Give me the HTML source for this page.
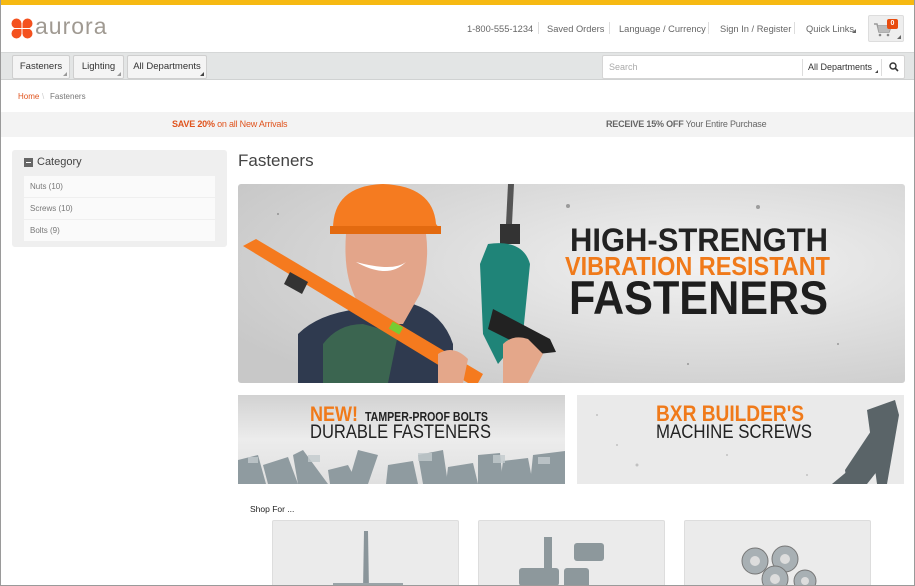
<!DOCTYPE html>
<html><head><meta charset="utf-8"><style>
*{margin:0;padding:0;box-sizing:border-box}
body{width:915px;height:586px;overflow:hidden;background:#fff;font-family:"Liberation Sans",Arial,sans-serif;position:relative;color:#555}
.frame{position:absolute;left:0;top:0;width:915px;height:586px;border:1px solid #9a9a9a;border-top:none;pointer-events:none;z-index:10}
.top{position:absolute;left:0;top:0;width:915px;height:5px;background:#f6b912}
.abs{position:absolute}
.hl{font-size:9.3px;color:#666;top:24px}
.sep{position:absolute;top:22px;width:1px;height:12px;background:#ddd}
.nav{position:absolute;left:1px;top:52px;width:913px;height:28px;background:#e3e5e5;border-top:1px solid #d5d7d7;border-bottom:1px solid #d0d2d2}
.btn{position:absolute;top:2px;height:24px;background:#f4f4f4;border:1px solid #cfcfcf;border-radius:2px;font-size:9.5px;color:#333;line-height:22px;text-align:center}
.tri{position:absolute;right:2px;bottom:2px;width:0;height:0;border-left:4px solid transparent;border-bottom:4px solid #999}
.promo{position:absolute;left:1px;top:112px;width:913px;height:25px;background:#f3f3f3;font-size:9px;line-height:25px}
.side{position:absolute;left:12px;top:150px;width:215px;height:97px;background:#efefef;border-radius:3px}
.item{position:absolute;left:12px;width:191px;height:21px;background:#fafafa;font-size:8px;color:#777;line-height:21px;padding-left:6px}
.card{position:absolute;top:520px;width:187px;height:66px;background:#ebebeb;border:1px solid #ddd;border-bottom:none;border-radius:2px 2px 0 0;overflow:hidden}
</style></head><body>
<div class="top"></div>
<div class="frame"></div>
<svg class="abs" style="left:11px;top:18px" width="22" height="21" viewBox="0 0 22 21">
<g fill="#f4511e"><circle cx="5.5" cy="5.5" r="5"/><circle cx="16.5" cy="5.5" r="5"/><circle cx="5.5" cy="15.5" r="5"/><circle cx="16.5" cy="15.5" r="5"/><rect x="5" y="5" width="12" height="11"/></g>
<path d="M11 0V21M0 10.5H22" stroke="#fff" stroke-width="1"/></svg>
<div class="abs" style="left:35px;top:13px;font-size:23px;color:#a09a92;letter-spacing:1px">aurora</div>
<div class="abs hl" style="left:467px">1-800-555-1234</div>
<div class="sep" style="left:538px"></div>
<div class="abs hl" style="left:547px">Saved Orders</div>
<div class="sep" style="left:609px"></div>
<div class="abs hl" style="left:619px">Language / Currency</div>
<div class="sep" style="left:708px"></div>
<div class="abs hl" style="left:720px">Sign In / Register</div>
<div class="sep" style="left:794px"></div>
<div class="abs hl" style="left:806px">Quick Links</div>
<div class="abs" style="left:852px;top:29px;border-left:4px solid transparent;border-bottom:4px solid #666"></div>
<div class="abs" style="left:868px;top:15px;width:36px;height:27px;background:#eee;border:1px solid #ddd;border-radius:2px">
<svg class="abs" style="left:5px;top:7px" width="18" height="14" viewBox="0 0 18 14"><path d="M0 1H3L5 9H15L17 3H4" fill="none" stroke="#999" stroke-width="1.5"/><path d="M4 3H17L15 9H5Z" fill="#bbb"/><circle cx="6" cy="12" r="1.3" fill="#888"/><circle cx="14" cy="12" r="1.3" fill="#888"/></svg>
<div class="abs" style="left:18px;top:3px;width:11px;height:10px;background:#e84c0e;border-radius:2px;color:#fff;font-size:7px;font-weight:bold;text-align:center;line-height:10px">0</div>
<div class="abs" style="right:2px;bottom:2px;border-left:4px solid transparent;border-bottom:4px solid #666"></div>
</div>
<div class="nav">
<div class="btn" style="left:11px;width:58px">Fasteners<span class="tri"></span></div>
<div class="btn" style="left:72px;width:51px">Lighting<span class="tri"></span></div>
<div class="btn" style="left:126px;width:80px">All Departments<span class="tri" style="border-bottom-color:#444"></span></div>
<div class="abs" style="left:601px;top:2px;width:303px;height:24px;background:#fff;border:1px solid #d5d5d5;border-radius:2px">
<div class="abs" style="left:6px;top:6px;font-size:9px;color:#aaa">Search</div>
<div class="abs" style="left:199px;top:3px;width:1px;height:17px;background:#ddd"></div>
<div class="abs" style="left:205px;top:6px;font-size:9px;color:#333">All Departments</div>
<div class="abs" style="left:272px;top:14px;border-left:3px solid transparent;border-bottom:3px solid #444"></div>
<div class="abs" style="left:278px;top:3px;width:1px;height:17px;background:#ddd"></div>
<svg class="abs" style="left:286px;top:6px" width="10" height="10" viewBox="0 0 10 10"><circle cx="4" cy="4" r="3" fill="none" stroke="#333" stroke-width="1.4"/><path d="M6.2 6.2L9 9" stroke="#333" stroke-width="1.6"/></svg>
</div>
</div>
<div class="abs" style="left:18px;top:92px;font-size:8px;color:#e0541e">Home</div>
<div class="abs" style="left:42px;top:92px;font-size:8px;color:#ccc">\</div>
<div class="abs" style="left:50px;top:92px;font-size:8px;color:#777">Fasteners</div>
<div class="promo"><span class="abs" style="left:171px;color:#e0541e;letter-spacing:-0.2px"><b>SAVE 20%</b> on all New Arrivals</span><span class="abs" style="left:605px;color:#666;letter-spacing:-0.2px"><b>RECEIVE 15% OFF</b> Your Entire Purchase</span></div>
<div class="side">
<div class="abs" style="left:12px;top:8px;width:9px;height:9px;background:#666"><div class="abs" style="left:2px;top:4px;width:5px;height:1px;background:#fff"></div></div>
<div class="abs" style="left:25px;top:6px;font-size:11px;color:#444">Category</div>
<div class="item" style="top:26px">Nuts (10)</div>
<div class="item" style="top:48px">Screws (10)</div>
<div class="item" style="top:70px">Bolts (9)</div>
</div>
<div class="abs" style="left:238px;top:151px;font-size:17px;color:#444">Fasteners</div>
<svg class="abs" style="left:238px;top:184px" width="667" height="199" viewBox="0 0 667 199">
<defs><radialGradient id="cg" cx="0.7" cy="0.4" r="0.8"><stop offset="0" stop-color="#f2f2f2"/><stop offset="1" stop-color="#c8c8c8"/></radialGradient></defs>
<rect width="667" height="199" rx="3" fill="url(#cg)"/>
<g fill="#555" opacity=".5"><circle cx="330" cy="22" r="2"/><circle cx="520" cy="23" r="2"/><circle cx="40" cy="30" r="1"/><circle cx="600" cy="160" r="1"/><circle cx="450" cy="180" r="1"/><circle cx="250" cy="120" r="1"/></g>
<path d="M60 199V150Q80 130 120 125L175 120Q205 130 215 160V199Z" fill="#2f3a4f"/>
<path d="M85 199V160Q100 140 125 140L160 150L150 199Z" fill="#3b6550"/>
<path d="M108 50Q105 90 118 115L135 140H165L182 110Q192 80 188 50Z" fill="#e3a58a"/>
<path d="M95 45Q95 2 145 0Q195 2 198 40L202 45L95 48Z" fill="#f57b20"/>
<path d="M92 42H203V50H92Z" fill="#e36a10"/>
<path d="M118 78Q150 96 168 78Q155 88 118 78Z" fill="#fff"/>
<path d="M5 62L18 55L245 190L240 199H230Z" fill="#f57a1e"/>
<path d="M52 88L70 98L64 110L46 100Z" fill="#333"/>
<rect x="152" y="140" width="12" height="8" fill="#7c3" transform="rotate(30 158 144)"/>
<path d="M270 0L276 0L274 40H268Z" fill="#555"/>
<path d="M262 40H282V60H262Z" fill="#333"/>
<path d="M250 60Q285 55 292 80L285 150L260 180L245 150L242 80Z" fill="#1f8478"/>
<path d="M255 125L312 155L318 168L300 170L250 145Z" fill="#222"/>
<path d="M265 160Q275 150 290 155L305 170L290 199H265Z" fill="#e4a78a"/>
<path d="M200 170Q215 160 230 175L225 199H200Z" fill="#e4a78a"/>
<text x="332" y="67" font-family="Liberation Sans" font-weight="bold" font-size="32" fill="#222" textLength="258" lengthAdjust="spacingAndGlyphs">HIGH-STRENGTH</text>
<text x="327" y="91" font-family="Liberation Sans" font-weight="bold" font-size="26" fill="#f07a1a" textLength="265" lengthAdjust="spacingAndGlyphs">VIBRATION RESISTANT</text>
<text x="331" y="130" font-family="Liberation Sans" font-weight="bold" font-size="47" fill="#1e1e1e" textLength="259" lengthAdjust="spacingAndGlyphs">FASTENERS</text>
</svg>
<svg class="abs" style="left:238px;top:395px" width="327" height="89" viewBox="0 0 327 89">
<defs><linearGradient id="lg" x1="0" y1="0" x2="0" y2="1"><stop offset="0" stop-color="#d2d2d2"/><stop offset=".5" stop-color="#ececec"/><stop offset="1" stop-color="#e0e0e0"/></linearGradient></defs>
<rect width="327" height="89" fill="url(#lg)"/>
<g fill="#8f9ba0">
<path d="M0 65L20 60L28 89H0Z"/><path d="M25 70L50 62L60 89H30Z"/><path d="M55 60L65 55L90 89H60Z"/><path d="M90 75L110 70L120 89H92Z"/><path d="M120 55L140 60L130 89H110Z"/><path d="M150 70L175 66L180 89H148Z"/><path d="M180 60L205 55L210 89H185Z"/><path d="M210 72L235 68L240 89H208Z"/><path d="M240 60L262 58L265 89H240Z"/><path d="M265 66L290 63L295 89H262Z"/><path d="M295 60L327 56V89H292Z"/>
</g>
<g fill="#c3cbce" opacity=".8"><rect x="10" y="62" width="10" height="6"/><rect x="70" y="60" width="12" height="7"/><rect x="180" y="58" width="14" height="8"/><rect x="255" y="60" width="12" height="8"/><rect x="300" y="62" width="12" height="7"/></g>
<text x="72" y="26" font-family="Liberation Sans" font-weight="bold" font-size="21" fill="#f07a1a" textLength="48" lengthAdjust="spacingAndGlyphs">NEW!</text>
<text x="127" y="26" font-family="Liberation Sans" font-weight="bold" font-size="12.5" fill="#222" textLength="123" lengthAdjust="spacingAndGlyphs">TAMPER-PROOF BOLTS</text>
<text x="72" y="43" font-family="Liberation Sans" font-size="19" fill="#222" textLength="181" lengthAdjust="spacingAndGlyphs">DURABLE FASTENERS</text>
</svg>
<svg class="abs" style="left:577px;top:395px" width="327" height="89" viewBox="0 0 327 89">
<rect width="327" height="89" fill="#eaeaea"/>
<g fill="#999" opacity=".5"><circle cx="20" cy="20" r="1"/><circle cx="60" cy="70" r="1.5"/><circle cx="150" cy="60" r="1"/><circle cx="230" cy="80" r="1"/><circle cx="40" cy="50" r="1"/></g>
<g fill="#5a6468"><path d="M268 75L298 30L310 45L285 89H270Z"/><path d="M255 89L290 60L305 70L290 89Z"/><path d="M290 15L318 5L322 20L310 89H300Z"/></g>
<text x="79" y="26" font-family="Liberation Sans" font-weight="bold" font-size="22" fill="#f07a1a" textLength="148" lengthAdjust="spacingAndGlyphs">BXR BUILDER'S</text>
<text x="79" y="43" font-family="Liberation Sans" font-size="19" fill="#222" textLength="156" lengthAdjust="spacingAndGlyphs">MACHINE SCREWS</text>
</svg>
<div class="abs" style="left:250px;top:504px;font-size:8.5px;color:#222">Shop For ...</div>
<div class="card" style="left:272px"><svg class="abs" style="left:60px;top:10px" width="70" height="60"><path d="M31 0L35 0L36 60H30Z" fill="#8a959a"/><path d="M0 52H70V60H0Z" fill="#9aa4a8"/></svg></div>
<div class="card" style="left:478px"><svg class="abs" style="left:40px;top:12px" width="100" height="58"><g fill="#8d989c"><rect x="25" y="4" width="8" height="40"/><rect x="55" y="10" width="30" height="18" rx="3"/><rect x="0" y="35" width="40" height="18" rx="3"/><rect x="45" y="35" width="25" height="20" rx="3"/></g></svg></div>
<div class="card" style="left:684px"><svg class="abs" style="left:45px;top:20px" width="100" height="50"><g fill="#a8b0b4" stroke="#777"><circle cx="25" cy="20" r="13"/><circle cx="55" cy="18" r="13"/><circle cx="45" cy="38" r="13"/><circle cx="75" cy="40" r="11"/></g><g fill="#ddd"><circle cx="25" cy="20" r="5"/><circle cx="55" cy="18" r="5"/><circle cx="45" cy="38" r="5"/><circle cx="75" cy="40" r="4"/></g></svg></div>
</body></html>
